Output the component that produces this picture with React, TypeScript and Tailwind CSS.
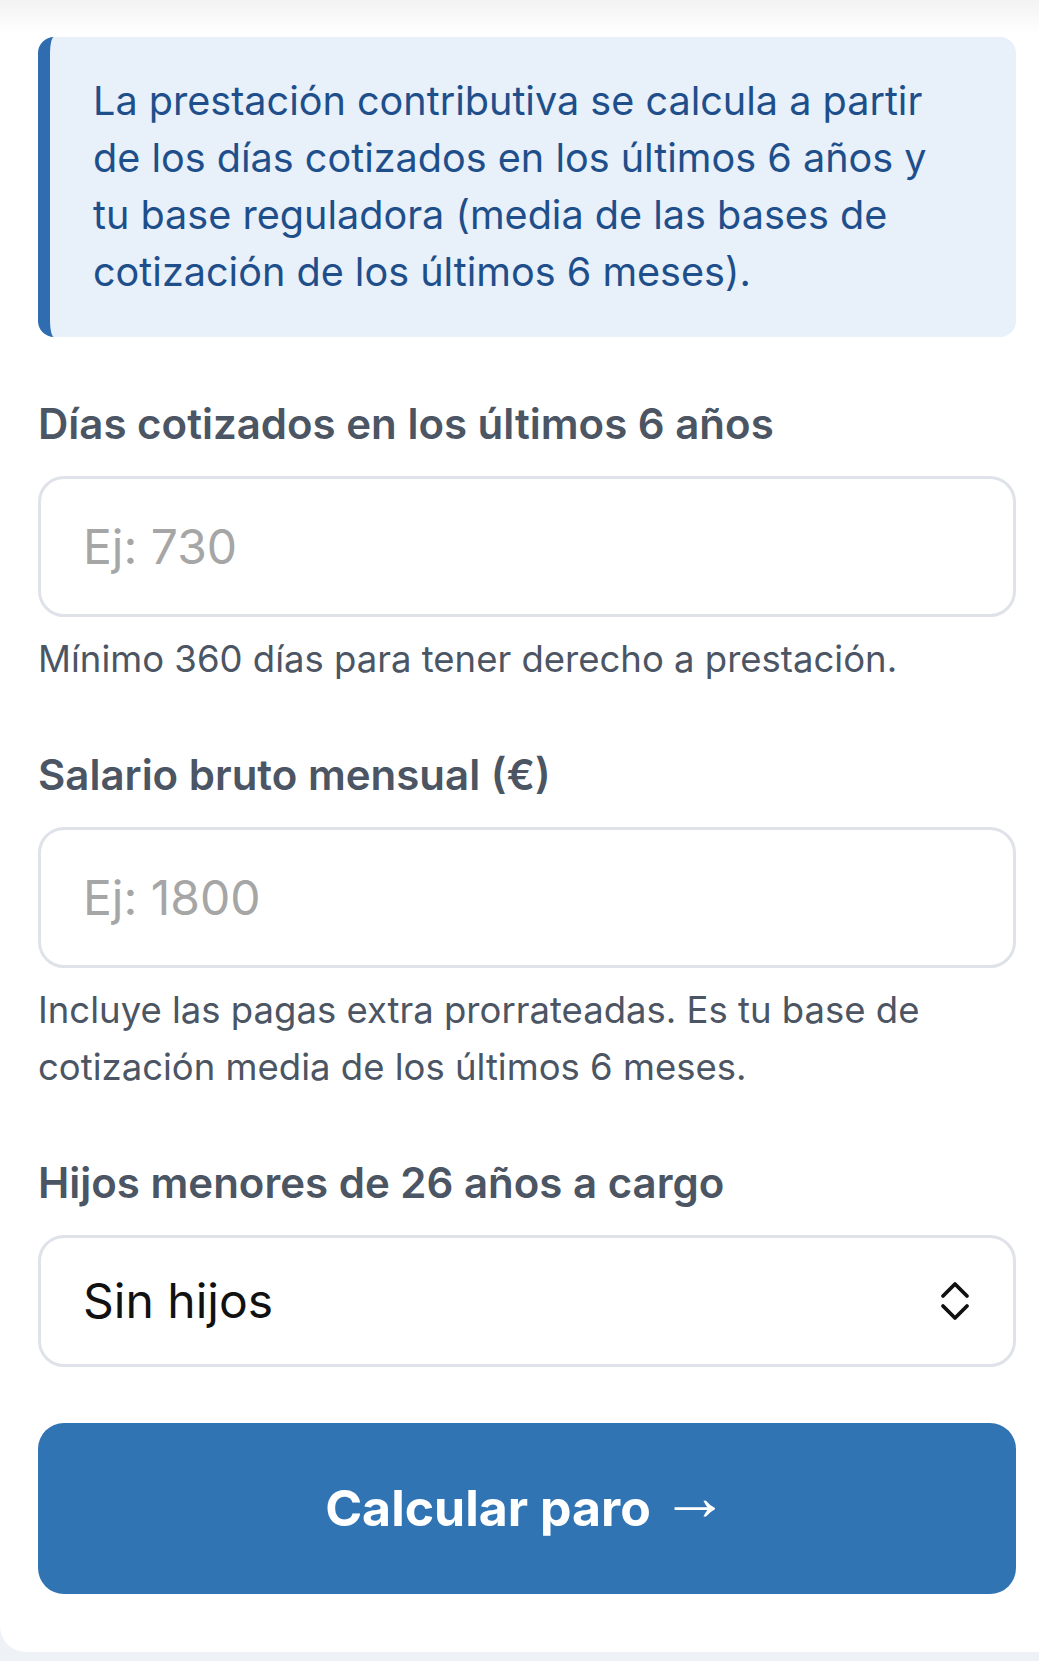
import { useState } from 'react'

const HIJOS_OPTIONS = ['Sin hijos', '1 hijo', '2 o más hijos']

const Label = ({ children, htmlFor }: { children: string; htmlFor: string }) => (
  <label
    htmlFor={htmlFor}
    className="block text-[42px] leading-[56px] font-semibold text-[#4b5563]"
  >
    {children}
  </label>
)

const Help = ({ children }: { children: string }) => (
  <p className="mt-[14px] text-[36.5px] leading-[57px] text-[#4b5563]">{children}</p>
)

const UpDown = () => (
  <svg width="30" height="42" viewBox="0 0 30 42" fill="none" aria-hidden="true">
    <path d="M3 16 L15 4 L27 16" stroke="#111" strokeWidth="3.8" strokeLinecap="round" strokeLinejoin="round" />
    <path d="M3 26 L15 38 L27 26" stroke="#111" strokeWidth="3.8" strokeLinecap="round" strokeLinejoin="round" />
  </svg>
)

export default function App() {
  const [dias, setDias] = useState('')
  const [salario, setSalario] = useState('')
  const [hijos, setHijos] = useState(HIJOS_OPTIONS[0])

  return (
    <div className="min-h-screen bg-[#eef1f5] font-['Inter',sans-serif]">
      <div className="rounded-bl-[26px] bg-[linear-gradient(to_bottom,#f3f3f3,#ffffff_34px)] pl-[38px] pr-[23px] pt-[37px] pb-[58px]">
        {/* Info note */}
        <div className="rounded-[16px] border-l-[12px] border-[#2f6db0] bg-[#e8f0fa] py-[36px] pl-[43px] pr-[50px]">
          <p className="text-[39.6px] leading-[57px] text-[#1f4f8a]">
            La prestación contributiva se calcula a partir de los días cotizados en los últimos 6 años y tu base
            reguladora (media de las bases de cotización de los últimos 6 meses).
          </p>
        </div>

        <div className="mt-[59px]">
          <Label htmlFor="dias">Días cotizados en los últimos 6 años</Label>
          <input
            id="dias"
            inputMode="numeric"
            value={dias}
            onChange={(e) => setDias(e.target.value)}
            placeholder="Ej: 730"
            className="mt-[24px] block h-[141px] w-full rounded-[26px] border-[3px] border-[#dfe2e8] bg-white px-[42px] text-[48px] text-[#111] outline-none placeholder:text-[#a6a6a6]"
          />
          <Help>Mínimo 360 días para tener derecho a prestación.</Help>
        </div>

        <div className="mt-[59px]">
          <Label htmlFor="salario">Salario bruto mensual (€)</Label>
          <input
            id="salario"
            inputMode="decimal"
            value={salario}
            onChange={(e) => setSalario(e.target.value)}
            placeholder="Ej: 1800"
            className="mt-[24px] block h-[141px] w-full rounded-[26px] border-[3px] border-[#dfe2e8] bg-white px-[42px] text-[48px] text-[#111] outline-none placeholder:text-[#a6a6a6]"
          />
          <Help>Incluye las pagas extra prorrateadas. Es tu base de cotización media de los últimos 6 meses.</Help>
        </div>

        <div className="mt-[59px]">
          <Label htmlFor="hijos">Hijos menores de 26 años a cargo</Label>
          <div className="relative mt-[24px]">
            <select
              id="hijos"
              value={hijos}
              onChange={(e) => setHijos(e.target.value)}
              className="block h-[132px] w-full appearance-none rounded-[26px] border-[3px] border-[#dfe2e8] bg-white px-[42px] text-[48px] text-[#111] outline-none"
            >
              {HIJOS_OPTIONS.map((o) => (
                <option key={o}>{o}</option>
              ))}
            </select>
            <span className="pointer-events-none absolute right-[46px] top-1/2 -translate-y-1/2">
              <UpDown />
            </span>
          </div>
        </div>

        <button
          type="button"
          className="mt-[56px] flex h-[171px] w-full items-center justify-center rounded-[26px] bg-[#3174b4] text-[50px] font-bold text-white"
        >
          Calcular paro
          <span className="ml-[10px] -translate-y-[13px] font-['Liberation_Sans',sans-serif] text-[68px] leading-none font-normal">
            →
          </span>
        </button>
      </div>
    </div>
  )
}
